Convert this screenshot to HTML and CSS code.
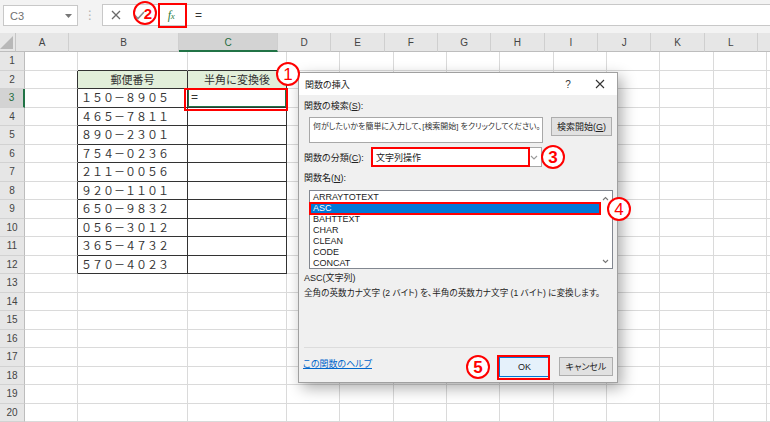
FILE: index.html
```html
<!DOCTYPE html>
<html lang="ja">
<head>
<meta charset="utf-8">
<title>関数の挿入</title>
<link rel="stylesheet" href="styles.css">
</head>
<body>
<div class="app">
  <div class="fbar">
    <div class="namebox"><span>C3</span><svg class="nb-arrow" width="7" height="4" viewBox="0 0 7 4"><path d="M0 0H7L3.5 4Z" fill="#777"/></svg></div>
    <div class="fdots">⋮</div>
    <div class="formula">
      <span class="fb-x"><svg width="10" height="10" viewBox="0 0 10 10"><path d="M1 1L9 9M9 1L1 9" stroke="#6a6a6a" stroke-width="1.3"/></svg></span>
      <span class="fb-ok"><svg width="11" height="9" viewBox="0 0 11 9"><path d="M1 4.5L4 7.5L10 1" stroke="#8a8a8a" stroke-width="1.6" fill="none"/></svg></span>
      <span class="fb-fx"><i>f</i><i class="fx-x">x</i></span>
      <span class="fb-val">=</span>
    </div>
  </div>

  <div class="sheet">
    <div class="row hdr">
      <div class="corner"><span class="tri"></span></div>
      <div class="ch ca">A</div>
      <div class="ch cb">B</div>
      <div class="ch cc sel">C</div>
      <div class="ch cx">D</div>
      <div class="ch cx">E</div>
      <div class="ch cx">F</div>
      <div class="ch cx">G</div>
      <div class="ch cx">H</div>
      <div class="ch cx">I</div>
      <div class="ch cx">J</div>
      <div class="ch cx">K</div>
      <div class="ch cx">L</div>
      <div class="ch cx"></div>
    </div>
    <div class="row"><div class="rh">1</div><div class="c ca"></div><div class="c cb bb"></div><div class="c cc bb"></div><div class="rest"></div></div>
    <div class="row"><div class="rh">2</div><div class="c ca br"></div><div class="c cb t th">郵便番号</div><div class="c cc t th">半角に変換後</div><div class="rest"></div></div>
    <div class="row"><div class="rh sel">3</div><div class="c ca br"></div><div class="c cb t">１５０－８９０５</div><div class="c cc t active">=</div><div class="rest"></div></div>
    <div class="row"><div class="rh">4</div><div class="c ca br"></div><div class="c cb t">４６５－７８１１</div><div class="c cc t"></div><div class="rest"></div></div>
    <div class="row"><div class="rh">5</div><div class="c ca br"></div><div class="c cb t">８９０－２３０１</div><div class="c cc t"></div><div class="rest"></div></div>
    <div class="row"><div class="rh">6</div><div class="c ca br"></div><div class="c cb t">７５４－０２３６</div><div class="c cc t"></div><div class="rest"></div></div>
    <div class="row"><div class="rh">7</div><div class="c ca br"></div><div class="c cb t">２１１－００５６</div><div class="c cc t"></div><div class="rest"></div></div>
    <div class="row"><div class="rh">8</div><div class="c ca br"></div><div class="c cb t">９２０－１１０１</div><div class="c cc t"></div><div class="rest"></div></div>
    <div class="row"><div class="rh">9</div><div class="c ca br"></div><div class="c cb t">６５０－９８３２</div><div class="c cc t"></div><div class="rest"></div></div>
    <div class="row"><div class="rh">10</div><div class="c ca br"></div><div class="c cb t">０５６－３０１２</div><div class="c cc t"></div><div class="rest"></div></div>
    <div class="row"><div class="rh">11</div><div class="c ca br"></div><div class="c cb t">３６５－４７３２</div><div class="c cc t"></div><div class="rest"></div></div>
    <div class="row"><div class="rh">12</div><div class="c ca br"></div><div class="c cb t">５７０－４０２３</div><div class="c cc t"></div><div class="rest"></div></div>
    <div class="row"><div class="rh">13</div><div class="c ca"></div><div class="c cb"></div><div class="c cc"></div><div class="rest"></div></div>
    <div class="row"><div class="rh">14</div><div class="c ca"></div><div class="c cb"></div><div class="c cc"></div><div class="rest"></div></div>
    <div class="row"><div class="rh">15</div><div class="c ca"></div><div class="c cb"></div><div class="c cc"></div><div class="rest"></div></div>
    <div class="row"><div class="rh">16</div><div class="c ca"></div><div class="c cb"></div><div class="c cc"></div><div class="rest"></div></div>
    <div class="row"><div class="rh">17</div><div class="c ca"></div><div class="c cb"></div><div class="c cc"></div><div class="rest"></div></div>
    <div class="row"><div class="rh">18</div><div class="c ca"></div><div class="c cb"></div><div class="c cc"></div><div class="rest"></div></div>
    <div class="row"><div class="rh">19</div><div class="c ca"></div><div class="c cb"></div><div class="c cc"></div><div class="rest"></div></div>
    <div class="row"><div class="rh">20</div><div class="c ca"></div><div class="c cb"></div><div class="c cc"></div><div class="rest"></div></div>
  </div>

  <div class="dlg">
    <div class="dlg-title">
      <span class="tt">関数の挿入</span>
      <span class="tq">?</span>
      <span class="tx"><svg width="10" height="10" viewBox="0 0 10 10"><path d="M1 1L9 9M9 1L1 9" stroke="#333" stroke-width="1.1"/></svg></span>
    </div>
    <div class="dlg-body">
      <div class="lbl l1">関数の検索(<u>S</u>):</div>
      <div class="srow">
        <div class="sbox">何がしたいかを簡単に入力して、[検索開始] をクリックしてください。</div>
        <div class="btn sbtn">検索開始(<u>G</u>)</div>
      </div>
      <div class="crow">
        <div class="clabel">関数の分類(<u>C</u>):</div>
        <div class="combo"><span>文字列操作</span><svg width="8" height="5" viewBox="0 0 8 5"><path d="M1 1L4 4L7 1" stroke="#9a9a9a" stroke-width="1.1" fill="none"/></svg></div>
      </div>
      <div class="lbl l3">関数名(<u>N</u>):</div>
      <div class="list">
        <div class="items">
          <div class="it">ARRAYTOTEXT</div>
          <div class="it on">ASC</div>
          <div class="it">BAHTTEXT</div>
          <div class="it">CHAR</div>
          <div class="it">CLEAN</div>
          <div class="it">CODE</div>
          <div class="it">CONCAT</div>
        </div>
        <div class="scroll">
          <svg width="7" height="5" viewBox="0 0 7 5"><path d="M1 4L3.5 1.5L6 4" stroke="#777" stroke-width="1.1" fill="none"/></svg>
          <svg width="7" height="5" viewBox="0 0 7 5"><path d="M1 1L3.5 3.5L6 1" stroke="#777" stroke-width="1.1" fill="none"/></svg>
        </div>
      </div>
      <div class="lbl sig">ASC(文字列)</div>
      <div class="lbl desc">全角の英数カナ文字 (2 バイト) を、半角の英数カナ文字 (1 バイト) に変換します。</div>
      <div class="sep"></div>
      <div class="foot">
        <span class="help">この関数のヘルプ</span>
        <span class="grow"></span>
        <div class="btn ok">OK</div>
        <div class="btn cancel">キャンセル</div>
      </div>
    </div>
  </div>

  <div class="rect r1"></div>
  <div class="rect rfx"></div>
  <div class="rect r3"></div>
  <div class="rect r4"></div>
  <div class="rect r5"></div>
  <div class="circ c1 thin">1</div>
  <div class="circ c2 clear">2</div>
  <div class="circ c3">3</div>
  <div class="circ c4 thin">4</div>
  <div class="circ c5">5</div>
</div>
</body>
</html>
```

FILE: styles.css
```css
* { box-sizing: border-box; margin: 0; padding: 0; }
body { margin: 0; background: #fff; font-family: "Noto Sans CJK JP", "Liberation Sans", sans-serif; }
.app { position: relative; width: 770px; height: 422px; overflow: hidden; background: #fff; }

/* formula bar */
.fbar { height: 33px; background: #f3f3f3; display: flex; align-items: flex-start; padding-top: 4px; }
.namebox { margin: 1px 0 0 3px; width: 75px; height: 21px; background: #fff; border: 1px solid #c8c8c8; display: flex; align-items: center; justify-content: space-between; padding: 0 5px 0 6px; font: 11px "Liberation Sans", sans-serif; color: #707070; }
.fdots { width: 24px; text-align: center; color: #b0b0b0; font: 12px "DejaVu Sans", sans-serif; line-height: 22px; }
.formula { flex: 1; height: 22px; background: #fff; border: 1px solid #c8c8c8; border-right: none; display: flex; align-items: center; }
.fb-x { width: 25px; display: flex; justify-content: center; }
.fb-ok { width: 22px; display: flex; justify-content: center; }
.fb-fx { width: 42px; text-align: center; color: #2b7a3c; font: italic 12px "Liberation Serif", serif; letter-spacing: -0.5px; }
.fb-fx .fx-x { font-size: 9px; }
.fb-val { padding-left: 3px; font: 12px "Liberation Sans", sans-serif; color: #333; }

/* sheet */
.sheet { display: flex; flex-direction: column; }
.row { display: flex; height: 18.5px; }
.row.hdr { height: 19px; }
.corner { width: 25px; background: #e6e6e6; border-right: 1px solid #c6c6c6; border-bottom: 1px solid #bdbdbd; display: flex; justify-content: flex-end; align-items: flex-end; padding: 0 2px 2px 0; }
.tri { width: 13px; height: 13px; background: #b8b8b8; clip-path: polygon(100% 0, 100% 100%, 0 100%); }
.ch { background: #e6e6e6; border-right: 1px solid #cfcfcf; border-bottom: 1px solid #bdbdbd; font: 10px "Liberation Sans", sans-serif; color: #444; display: flex; align-items: center; justify-content: center; padding-top: 1px; }
.ch.sel { background: #d3d3d3; border-bottom: 2px solid #217346; color: #1e6b40; }
.ca { width: 53px; flex: 0 0 53px; }
.cb { width: 110px; flex: 0 0 110px; }
.cc { width: 99px; flex: 0 0 99px; }
.cx { flex: 0 0 53.33px; }
.rh { width: 25px; flex: 0 0 25px; background: #e6e6e6; border-right: 1px solid #bdbdbd; border-bottom: 1px solid #d2d2d2; font: 10px "Liberation Sans", sans-serif; color: #444; display: flex; align-items: center; justify-content: center; }
.rh.sel { background: #d3d3d3; border-right: 2px solid #217346; color: #1e6b40; }
.c { border-right: 1px solid #dadada; border-bottom: 1px solid #dadada; font-size: 11px; line-height: 17px; color: #333; padding-left: 3px; white-space: nowrap; }
.c.br { border-right-color: #333; }
.c.bb { border-bottom-color: #333; }
.c.t { border-right-color: #333; border-bottom-color: #333; }
.c.th { background: #e2efda; text-align: center; padding-left: 0; }
.c.active { box-shadow: inset 1px 1px 0 #217346, inset -1px -1px 0 #217346; font: 12px "Liberation Sans", sans-serif; line-height: 17px; }
.rest { flex: 1; border-bottom: 1px solid #dadada; background: repeating-linear-gradient(90deg, transparent 0 52.33px, #dadada 52.33px 53.33px); }

/* dialog */
.dlg { position: absolute; left: 298px; top: 72px; width: 320px; height: 311px; background: #f0f0f0; border: 1px solid #a0a0a0; box-shadow: 4px 5px 14px rgba(0,0,0,0.33); font-family: "Liberation Sans", "Noto Sans CJK JP", sans-serif; font-size: 9px; color: #222; font-feature-settings: "palt"; display: flex; flex-direction: column; }
.dlg-title { height: 22px; background: #fff; display: flex; align-items: center; padding: 0 7px 0 6px; }
.dlg-title .tt { flex: 1; }
.tq { width: 20px; text-align: center; font-size: 10px; color: #333; }
.tx { width: 20px; margin-left: 12px; display: flex; justify-content: center; }
.dlg-body { flex: 1; padding: 0 4px 0 5px; display: flex; flex-direction: column; }
.lbl { height: 12px; line-height: 12px; white-space: nowrap; }
.l1 { margin-top: 5px; }
.srow { margin-top: 5px; display: flex; align-items: flex-start; }
.sbox { margin-left: 5px; width: 234px; height: 26px; background: #fff; border: 1px solid #a8a8a8; padding: 3px 0 0 3px; font-size: 7.95px; line-height: 11px; color: #333; white-space: nowrap; overflow: hidden; }
.btn { display: flex; align-items: center; justify-content: center; background: #e1e1e1; border: 1px solid #adadad; }
.sbtn { margin-left: 8px; width: 61px; height: 19px; }
.crow { margin-top: 4px; height: 20px; display: flex; align-items: center; }
.clabel { width: 67px; white-space: nowrap; }
.combo { width: 171px; height: 20px; background: #fff; border: 1px solid #a8a8a8; display: flex; align-items: center; justify-content: space-between; padding: 0 3px 0 4px; }
.l3 { margin-top: 5px; }
.list { margin: 6px 0 0 5px; width: 304px; height: 79px; background: #fff; border: 1px solid #828790; display: flex; }
.items { flex: 1; padding-top: 1px; }
.it { height: 11px; line-height: 11px; padding-left: 3px; font-size: 9px; color: #222; }
.it.on { background: #0078d7; color: #fff; }
.scroll { width: 13px; display: flex; flex-direction: column; justify-content: space-between; align-items: center; padding: 5px 0 4px; }
.sig { margin-top: 3px; }
.desc { margin-top: 3px; font-size: 8.6px; }
.sep { margin-top: 48px; height: 1px; background: #dcdcdc; }
.foot { margin-top: 9px; display: flex; align-items: flex-start; }
.help { margin: 1px 0 0 -1px; color: #0066cc; text-decoration: underline; line-height: 12px; }
.grow { flex: 1; }
.ok { width: 51px; height: 20px; background: #e5f1fb; border: 1px solid #0078d7; }
.cancel { margin-left: 9px; width: 54px; height: 19px; }

/* annotations */
.rect { position: absolute; border: 2px solid #f00; }
.r1 { left: 184px; top: 88px; width: 104px; height: 23px; }
.rfx { left: 158px; top: 3px; width: 29px; height: 25px; }
.r3 { left: 371px; top: 147px; width: 159px; height: 20px; }
.r4 { left: 309px; top: 202px; width: 292px; height: 13px; }
.r5 { left: 497px; top: 355px; width: 53px; height: 25px; }
.circ { position: absolute; width: 24px; height: 24px; border: 2px solid #f00; border-radius: 50%; background: #fff; color: #f00; display: flex; align-items: center; justify-content: center; font: bold 17px "Liberation Sans", sans-serif; line-height: 1; }
.circ.thin { font-weight: normal; }
.circ.clear { background: transparent; padding-left: 6px; font-size: 15px; }
.c1 { left: 276px; top: 62px; }
.c2 { left: 133px; top: 1px; }
.c3 { left: 541px; top: 145px; }
.c4 { left: 607px; top: 197px; }
.c5 { left: 466px; top: 355px; }
```
